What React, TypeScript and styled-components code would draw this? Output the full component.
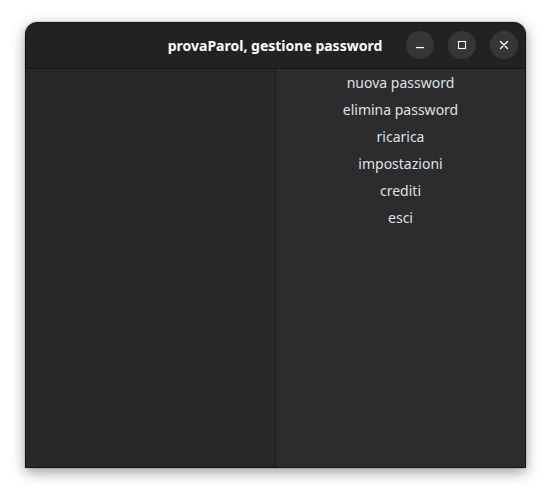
import React from "react";
import styled, { createGlobalStyle } from "styled-components";

const Global = createGlobalStyle`
  html, body { margin: 0; padding: 0; background: #ffffff; }
  body { font-family: "Noto Sans", "DejaVu Sans", sans-serif; }
`;

const Page = styled.div`
  width: 552px;
  height: 497px;
  box-sizing: border-box;
  padding: 22px 26px 29px 25px;
  display: flex;
`;

const Window = styled.div`
  flex: 1;
  display: flex;
  flex-direction: column;
  border-radius: 12px 12px 0 0;
  background: #222222;
  border: 1px solid #161616;
  box-shadow: 0 4px 14px rgba(0, 0, 0, 0.4), 0 0 0 1px rgba(0, 0, 0, 0.08);
  overflow: hidden;
`;

const TitleBar = styled.div`
  height: 45px;
  flex: 0 0 45px;
  display: flex;
  align-items: center;
  justify-content: center;
  position: relative;
  background: #222222;
  border-bottom: 1px solid #151515;
`;

const Title = styled.div`
  color: #ffffff;
  font-weight: 700;
  font-size: 14px;
  margin-left: -1px;
  margin-top: -1px;
`;

const Controls = styled.div`
  position: absolute;
  right: 7px;
  top: 8px;
  display: flex;
  gap: 14px;
`;

const CtrlButton = styled.div`
  width: 28px;
  height: 28px;
  border-radius: 50%;
  background: #363636;
  display: flex;
  align-items: center;
  justify-content: center;
`;

const Body = styled.div`
  flex: 1;
  display: flex;
`;

const LeftPane = styled.div`
  width: 249px;
  background: #282828;
  border-right: 1px solid #1a1a1a;
`;

const RightPane = styled.div`
  flex: 1;
  background: #2c2c2c;
  display: flex;
  flex-direction: column;
  align-items: center;
  padding-top: 0;
`;

const MenuItem = styled.div`
  height: 27px;
  line-height: 27px;
  color: #dce2e9;
  font-size: 14px;
`;

const items = [
  "nuova password",
  "elimina password",
  "ricarica",
  "impostazioni",
  "crediti",
  "esci",
];

export default function App() {
  return (
    <>
      <Global />
      <Page>
        <Window>
          <TitleBar>
            <Title>provaParol, gestione password</Title>
            <Controls>
              <CtrlButton>
                <svg width="16" height="16" viewBox="0 0 16 16">
                  <rect x="4" y="10" width="8" height="1.2" fill="#ffffff" />
                </svg>
              </CtrlButton>
              <CtrlButton>
                <svg width="16" height="16" viewBox="0 0 16 16">
                  <rect x="4.5" y="4.5" width="7" height="7" fill="none" stroke="#ffffff" strokeWidth="1.1" />
                </svg>
              </CtrlButton>
              <CtrlButton>
                <svg width="16" height="16" viewBox="0 0 16 16">
                  <path d="M4.5 4.5 L11.5 11.5 M11.5 4.5 L4.5 11.5" stroke="#ffffff" strokeWidth="1.4" strokeLinecap="round" />
                </svg>
              </CtrlButton>
            </Controls>
          </TitleBar>
          <Body>
            <LeftPane />
            <RightPane>
              {items.map((t) => (
                <MenuItem key={t}>{t}</MenuItem>
              ))}
            </RightPane>
          </Body>
        </Window>
      </Page>
    </>
  );
}
